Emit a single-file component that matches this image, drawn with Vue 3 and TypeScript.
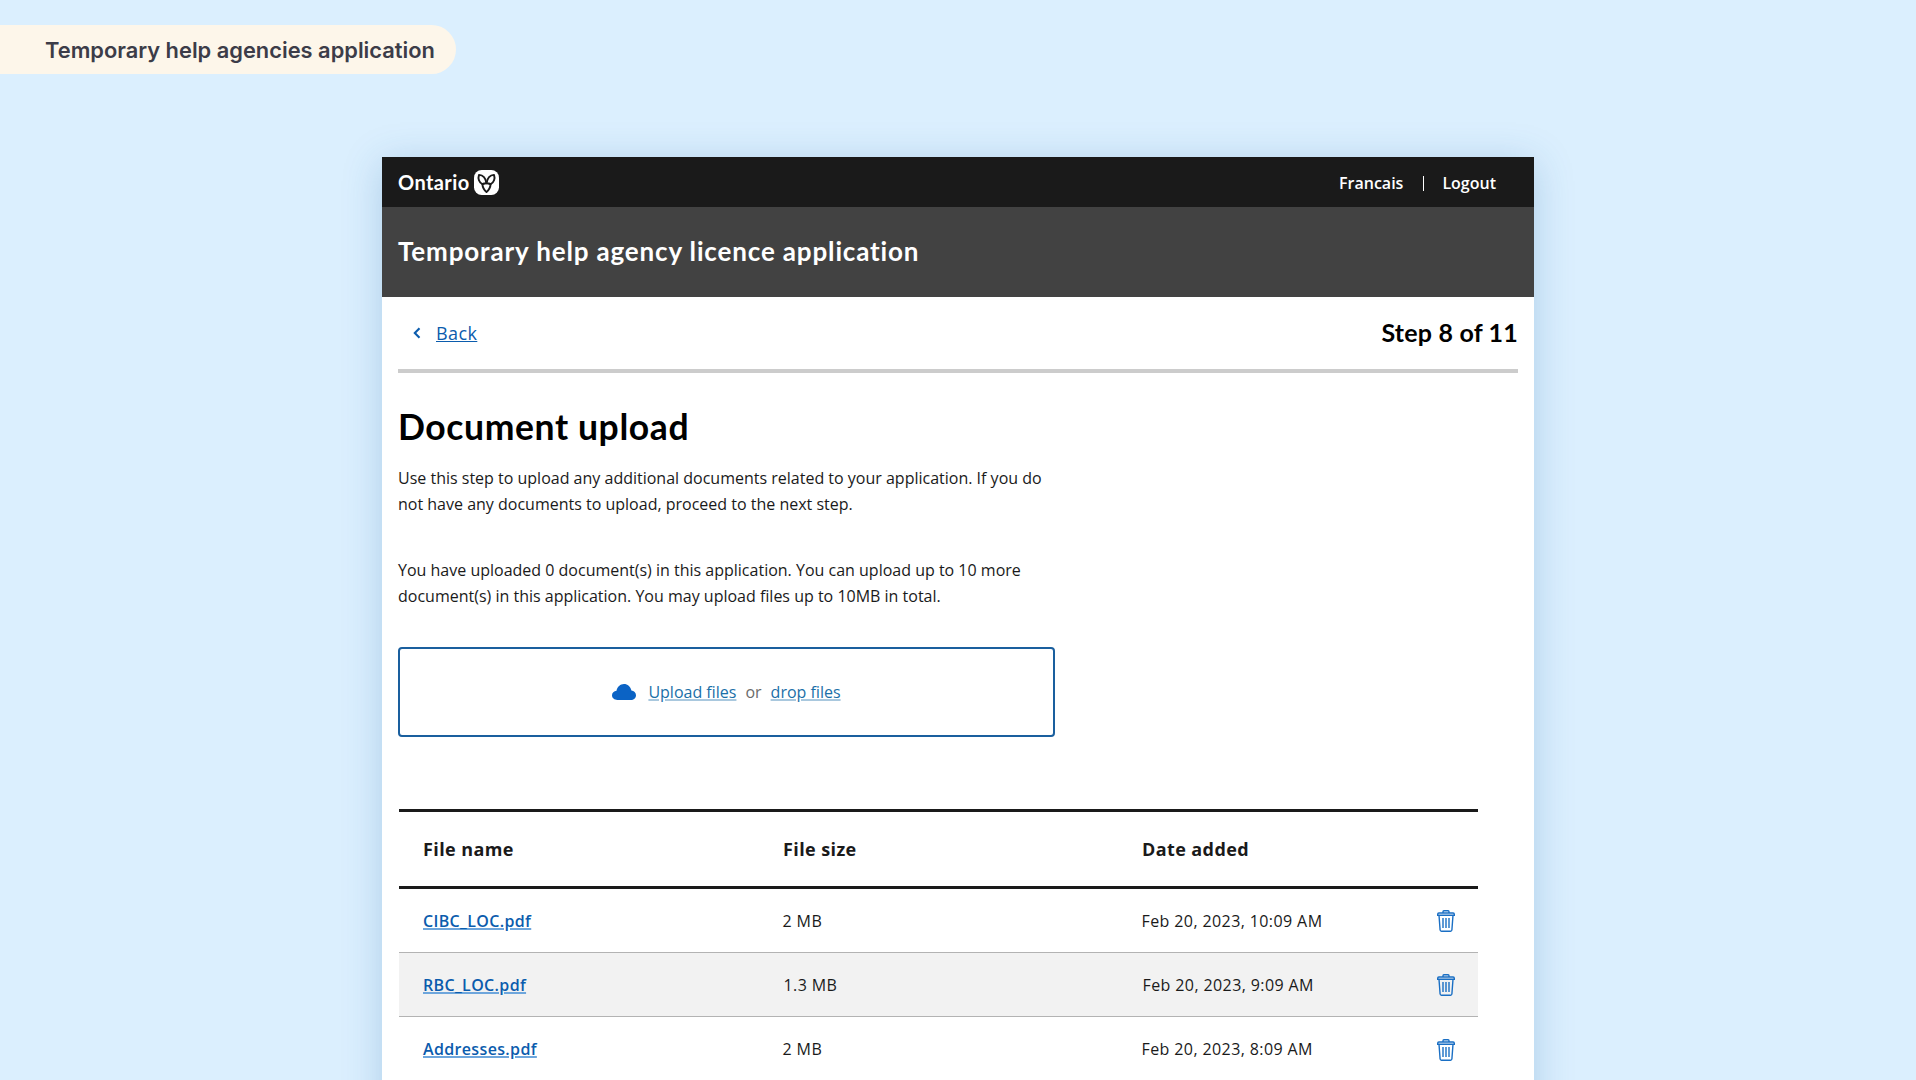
<template>
  <div class="page">
    <div class="pill">Temporary help agencies application</div>

    <div class="card">
      <!-- Top bar -->
      <header class="top-bar">
        <div class="brand">
          <span class="brand-name">Ontario</span>
          <svg class="brand-logo" viewBox="0 0 26 26">
            <rect width="26" height="26" rx="8" fill="#fff" />
            <g fill="#fff" stroke="#1a1a1a" stroke-width="2" stroke-linejoin="round">
              <path d="M13 23c-2.600-2.200-4.100-5.300-4.300-8.400 2.600-1.300 6-1.300 8.600 0-.2 3.100-1.700 6.200-4.300 8.400Z" />
              <path d="M13 13.800C12.300 9.500 9.600 5.400 5.200 5.100 3.900 8.800 5.200 13 8.700 14.600c1.300-.6 2.800-.9 4.300-.8Z" />
              <path d="M13 13.800c.7-4.300 3.400-8.400 7.800-8.700 1.300 3.700 0 7.900-3.500 9.500-1.300-.6-2.800-.9-4.300-.8Z" />
            </g>
          </svg>
        </div>
        <nav class="top-links">
          <span>Francais</span>
          <span class="divider"></span>
          <span>Logout</span>
        </nav>
      </header>

      <div class="title-bar">Temporary help agency licence application</div>

      <main class="content">
        <div class="step-row">
          <a class="back-link" href="#">
            <svg class="chevron" viewBox="0 0 8 12">
              <path d="M6.500 1.200 1.800 6l4.700 4.800" fill="none" stroke="#0b5cad" stroke-width="2.100" />
            </svg>
            <span>Back</span>
          </a>
          <span class="step-count">Step 8 of 11</span>
        </div>

        <h1 class="page-title">Document upload</h1>

        <p class="intro">
          Use this step to upload any additional documents related to your application. If you do
          not have any documents to upload, proceed to the next step.
        </p>
        <p class="intro second">
          You have uploaded 0 document(s) in this application. You can upload up to 10 more
          document(s) in this application. You may upload files up to 10MB in total.
        </p>

        <div class="dropzone">
          <svg class="cloud" viewBox="0 0 24 16">
            <path
              d="M5.400 16C2.400 16 0 14 0 11.300 0 8.800 2 6.900 4.500 6.700 5.300 2.800 8.300 0 12 0c3.600 0 6.500 2.700 7.400 6.400 2.600.2 4.600 2.200 4.600 4.800 0 2.700-2.300 4.800-5.200 4.800Z"
              fill="#0b63c5"
            />
          </svg>
          <a href="#">Upload files</a>
          <span class="or">or</span>
          <a href="#">drop files</a>
        </div>

        <table class="files">
          <thead>
            <tr>
              <th class="col-name">File name</th>
              <th class="col-size">File size</th>
              <th class="col-date">Date added</th>
              <th class="col-action"></th>
            </tr>
          </thead>
          <tbody>
            <tr v-for="file in files" :key="file.name" :class="{ alt: file.alt }">
              <td><a href="#">{{ file.name }}</a></td>
              <td class="meta">{{ file.size }}</td>
              <td class="meta">{{ file.added }}</td>
              <td class="action">
                <svg class="trash" viewBox="0 0 18 22" fill="none" stroke="#1a6fc4" stroke-width="1.400">
                  <path d="M6 3V1.700C6 1.200 6.400.8 6.900.8h4.200c.5 0 .9.400.9.900V3" />
                  <path d="M.7 5.200V4.200C.7 3.500 1.200 3 1.900 3h14.200c.7 0 1.200.5 1.200 1.200v1Z" />
                  <path d="M2 5.200 3.100 20c.1.700.6 1.200 1.300 1.200h9.200c.7 0 1.200-.5 1.300-1.200L16 5.200" />
                  <path d="M6 8v10M9 8v10M12 8v10" />
                </svg>
              </td>
            </tr>
          </tbody>
        </table>
      </main>
    </div>
  </div>
</template>

<script setup lang="ts">
interface UploadedFile {
  name: string
  size: string
  added: string
  alt: boolean
}

const files: UploadedFile[] = [
  { name: 'CIBC_LOC.pdf', size: '2 MB', added: 'Feb 20, 2023, 10:09 AM', alt: false },
  { name: 'RBC_LOC.pdf', size: '1.3 MB', added: 'Feb 20, 2023, 9:09 AM', alt: true },
  { name: 'Addresses.pdf', size: '2 MB', added: 'Feb 20, 2023, 8:09 AM', alt: false },
]
</script>

<style>
html,
body {
  margin: 0;
  background: #dbeffe;
}
</style>

<style scoped>
.page {
  height: 100vh;
  overflow: hidden;
  padding-top: 25px;
  box-sizing: border-box;
  background: #dbeffe;
  font-family: 'Open Sans', sans-serif;
  color: #1a1a1a;
}

.pill {
  width: 411px;
  height: 49px;
  padding-left: 45px;
  display: flex;
  align-items: center;
  background: #fdf6ea;
  border-radius: 0 25px 25px 0;
  font-family: Inter, sans-serif;
  font-size: 21.850px;
  font-weight: 600;
  color: #3c3c48;
}

.card {
  width: 1152px;
  margin: 83px auto 0;
  background: #fff;
  box-shadow: 0 6px 36px rgba(40, 110, 170, 0.25);
}

.top-bar {
  height: 50px;
  padding: 0 38px 0 16px;
  display: flex;
  align-items: center;
  justify-content: space-between;
  background: #1a1a1a;
  color: #fff;
}

.brand {
  display: flex;
  align-items: center;
  gap: 4px;
}

.brand-name {
  font-family: Lato, sans-serif;
  font-size: 20px;
  font-weight: 700;
  letter-spacing: 0.4px;
}

.brand-logo {
  width: 25px;
  height: 25px;
}

.top-links {
  display: flex;
  align-items: center;
  padding-top: 2px;
  font-size: 16px;
  font-weight: 600;
}

.divider {
  width: 1px;
  height: 15px;
  margin: 0 18px 0 20px;
  background: #fff;
}

.title-bar {
  height: 88px;
  padding: 0 0 2px 16px;
  display: flex;
  align-items: center;
  background: #424242;
  color: #fff;
  font-family: Lato, sans-serif;
  font-size: 26px;
  font-weight: 700;
  letter-spacing: 0.85px;
}

.content {
  padding: 0 16px 40px;
}

.step-row {
  height: 70px;
  padding-bottom: 2px;
  display: flex;
  align-items: center;
  justify-content: space-between;
  border-bottom: 4px solid #cccccc;
}

.back-link {
  display: flex;
  align-items: center;
  gap: 15px;
  margin-left: 15px;
  padding-top: 2px;
  font-size: 18px;
  font-weight: 500;
  letter-spacing: 0.4px;
  color: #0b5cad;
}

.chevron {
  width: 8px;
  height: 12px;
}

.step-count {
  font-family: Lato, sans-serif;
  font-size: 25px;
  font-weight: 700;
  letter-spacing: 0.2px;
  color: #000;
}

.page-title {
  margin: 33px 0 0;
  font-family: Lato, sans-serif;
  font-size: 35.500px;
  font-weight: 700;
  line-height: 42px;
  letter-spacing: 0.6px;
  color: #000;
}

.intro {
  width: 660px;
  margin: 17px 0 0;
  font-size: 16px;
  line-height: 26px;
}

.intro.second {
  margin-top: 40px;
}

.dropzone {
  width: 657px;
  height: 90px;
  margin-top: 38px;
  display: flex;
  align-items: center;
  justify-content: center;
  gap: 9px;
  box-sizing: border-box;
  border: 2px solid #1a5f9e;
  border-radius: 4px;
  font-size: 16px;
}

.dropzone a {
  color: #1a6fa8;
  text-decoration-color: #a9c8de;
  text-decoration-thickness: 2px;
}

.or {
  color: #6b6b6b;
}

.cloud {
  width: 24px;
  height: 16px;
  margin-right: 3px;
}

.files {
  width: 1079px;
  margin: 72px 0 0 1px;
  border-collapse: collapse;
  table-layout: fixed;
  border-top: 3px solid #1a1a1a;
}

.files th,
.files td {
  padding: 0 0 0 24px;
  box-sizing: border-box;
  text-align: left;
  font-size: 16px;
}

.col-name {
  width: 360px;
}

.col-size {
  width: 359px;
}

.col-date {
  width: 250px;
}

.col-action {
  width: 110px;
}

.files th {
  height: 77px;
  font-size: 18px;
  font-weight: 700;
  letter-spacing: 0.4px;
  border-bottom: 3px solid #1a1a1a;
}

.files td {
  height: 64px;
  padding-top: 1px;
  border-bottom: 1px solid #b3b3b3;
}

.files tbody tr:first-child td {
  height: 65px;
}

.files tbody tr:last-child td {
  border-bottom: none;
}

.files a {
  color: #0b5cad;
  font-weight: 600;
  letter-spacing: 0.35px;
  text-decoration-color: #6ea6dc;
  text-decoration-thickness: 2px;
}

.files tr.alt td {
  background: #f2f2f2;
}

.files td.meta {
  padding-left: 23.500px;
  letter-spacing: 0.4px;
}

.files tr.alt td.meta {
  padding-left: 24.500px;
}

.files td.action {
  padding: 0 23px 0 0;
  text-align: right;
}

.trash {
  display: inline-block;
  width: 18px;
  height: 22px;
  vertical-align: middle;
}
</style>
